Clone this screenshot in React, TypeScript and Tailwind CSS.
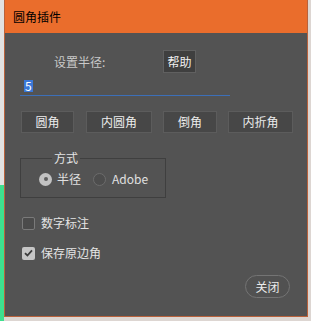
import React from "react";

const font = { fontFamily: '"Noto Sans CJK SC", "Noto Sans", sans-serif' };

function Btn({ label, w }: { label: string; w: string }) {
  return (
    <button
      className={`flex h-[22px] items-center justify-center border border-[#5c5c5c] bg-[#474747] text-[12px] leading-none text-[#ececec] ${w}`}
    >
      {label}
    </button>
  );
}

export default function App() {
  return (
    <div className="flex h-[321px] w-[311px] bg-[#ddd6d2]" style={font}>
      <div className="flex w-[4px] flex-col">
        <div className="h-[185px] bg-[#e2e2e2]" />
        <div className="flex-1 bg-[#3fdf8e]" />
      </div>

      <div className="flex h-[317px] w-[304px] flex-col border-x border-b border-[#b9623c] bg-[#535353]">
        <div className="flex h-[33px] items-center bg-[#ea6d2c] pl-[8px]">
          <span className="text-[12px] text-black">圆角插件</span>
        </div>

        <div className="mt-[17px] flex h-[23px] items-center">
          <span className="ml-[49px] w-[109px] text-[12px] text-[#c9c9c9]">设置半径:</span>
          <button className="flex h-[23px] w-[33px] items-center justify-center border border-[#606060] bg-[#3f3f3f] text-[12px] text-[#f0f0f0]">
            帮助
          </button>
        </div>

        <div className="ml-[15px] mt-[5px] flex h-[18px] w-[210px] items-end border-b border-[#3c6fb8] pb-[3px]">
          <span className="ml-[4px] bg-[#3a78d8] px-[1px] text-[12px] leading-[12px] text-white">5</span>
        </div>

        <div className="ml-[16px] mt-[15px] flex">
          <Btn label="圆角" w="w-[53px]" />
          <div className="w-[12px]" />
          <Btn label="内圆角" w="w-[66px]" />
          <div className="w-[11px]" />
          <Btn label="倒角" w="w-[54px]" />
          <div className="w-[11px]" />
          <Btn label="内折角" w="w-[65px]" />
        </div>

        <fieldset className="ml-[15px] mt-[19px] w-[146px] border border-[#3f3f3f] pb-[11px] pl-[18px]">
          <legend className="ml-[13px] px-[2px] text-[12px] leading-[12px] text-[#e4e4e4]">方式</legend>
          <div className="mt-[8px] flex h-[14px] items-center text-[12px] text-[#e0e0e0]">
            <span className="flex h-[13px] w-[13px] items-center justify-center rounded-full bg-[#c2c2c2]">
              <span className="h-[4px] w-[4px] rounded-full bg-[#5e5e5e]" />
            </span>
            <span className="ml-[5px]">半径</span>
            <span className="ml-[12px] h-[13px] w-[13px] rounded-full border border-[#6c6c6c] bg-[#4d4d4d]" />
            <span className="ml-[6px]">Adobe</span>
          </div>
        </fieldset>

        <div className="ml-[17px] mt-[18px] flex h-[14px] items-center text-[12px] text-[#e4e4e4]">
          <span className="h-[13px] w-[13px] rounded-[2px] border border-[#7a7a7a] bg-[#4b4b4b]" />
          <span className="ml-[6px]">数字标注</span>
        </div>

        <div className="ml-[17px] mt-[16px] flex h-[14px] items-center text-[12px] text-[#e4e4e4]">
          <span className="flex h-[13px] w-[13px] items-center justify-center rounded-[2px] bg-[#c6c6c6]">
            <svg width="9" height="8" viewBox="0 0 9 8">
              <path d="M1 4.2 L3.4 6.5 L8 1.3" fill="none" stroke="#3c3c3c" strokeWidth="1.8" />
            </svg>
          </span>
          <span className="ml-[6px]">保存原边角</span>
        </div>

        <div className="mt-[15px] flex justify-end pr-[17px]">
          <button className="flex h-[23px] w-[45px] items-center justify-center rounded-full border border-[#747474] bg-[#515151] text-[12px] text-[#ececec]">
            关闭
          </button>
        </div>
      </div>

      <div className="w-[3px]" />
    </div>
  );
}
